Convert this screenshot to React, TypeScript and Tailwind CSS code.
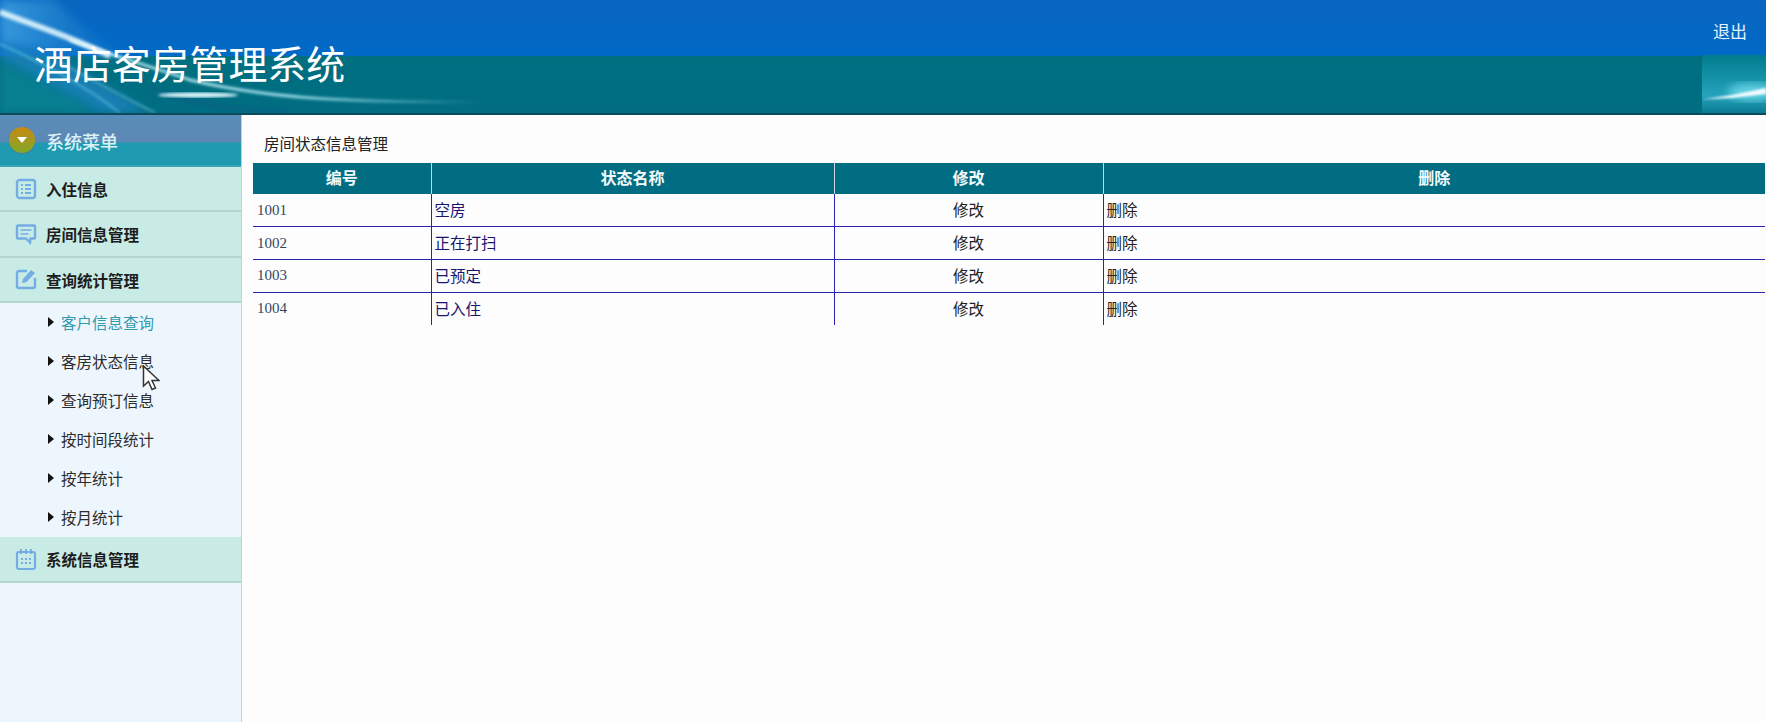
const cjk = "font-['Noto_Sans_CJK_SC',sans-serif]";

const rows = [
  { id: "1001", name: "空房" },
  { id: "1002", name: "正在打扫" },
  { id: "1003", name: "已预定" },
  { id: "1004", name: "已入住" },
];

const subMenu = ["客户信息查询", "客房状态信息", "查询预订信息", "按时间段统计", "按年统计", "按月统计"];

const ListIcon = () => (
  <svg width="22" height="22" viewBox="0 0 22 22" fill="none" stroke="#74ace4" strokeWidth="2.4">
    <rect x="2" y="2" width="18" height="18" rx="2.5" />
    <path d="M6 7h2M10 7h6M6 11h2M10 11h6M6 15h2M10 15h6" strokeWidth="1.8" />
  </svg>
);

const ChatIcon = () => (
  <svg width="22" height="22" viewBox="0 0 22 22" fill="none" stroke="#74ace4" strokeWidth="2.4">
    <path d="M3 2.500h16a1 1 0 0 1 1 1v11a1 1 0 0 1-1 1h-3.500l-.5 4-4-4H3a1 1 0 0 1-1-1v-11a1 1 0 0 1 1-1z" />
    <path d="M5.500 7h11M5.500 11h8" strokeWidth="1.700" />
  </svg>
);

const EditIcon = () => (
  <svg width="22" height="22" viewBox="0 0 22 22" fill="none" stroke="#74ace4" strokeWidth="2.4">
    <path d="M12 3H4a2 2 0 0 0-2 2v13a2 2 0 0 0 2 2h14a2 2 0 0 0 2-2v-8" />
    <path d="M7 15l1-4 8-9 4 3-8.500 9z" fill="#74ace4" stroke="none" />
  </svg>
);

const CalendarIcon = () => (
  <svg width="22" height="22" viewBox="0 0 22 22" fill="none" stroke="#74ace4" strokeWidth="2.2">
    <rect x="2" y="4" width="18" height="17" rx="2" />
    <path d="M6 1v5M11 1v5M16 1v5" strokeWidth="1.800" />
    <path d="M6 11h2M10 11h2M14 11h2M6 15h2M10 15h2M14 15h2" strokeWidth="1.800" />
  </svg>
);

const Cursor = () => (
  <svg width="18" height="26" viewBox="0 0 18 26" className="absolute left-[142px] top-[23px]">
    <path d="M1.500 1v20l5-4.500 3.500 8 3.500-1.500-3.500-7.500h7z" fill="#fff" stroke="#333" strokeWidth="1.500" />
  </svg>
);

const HeaderSwoosh = () => (
  <svg width="520" height="113" viewBox="0 0 520 113" fill="none" className="absolute left-0 top-0">
    <defs>
      <linearGradient id="fade" x1="0" x2="1" y1="0" y2="0">
        <stop offset="0" stopColor="#d8f6ff" />
        <stop offset="0.55" stopColor="#b5eef8" />
        <stop offset="1" stopColor="#8fe0f0" stopOpacity="0" />
      </linearGradient>
      <linearGradient id="glow" x1="0" x2="1" y1="0" y2="0">
        <stop offset="0" stopColor="#3a9ade" />
        <stop offset="1" stopColor="#0a6fbe" stopOpacity="0" />
      </linearGradient>
      <filter id="soft"><feGaussianBlur stdDeviation="1.500" /></filter>
      <filter id="softer"><feGaussianBlur stdDeviation="5" /></filter>
    </defs>
    <path d="M0 0H55C80 30 110 45 150 62L100 60L0 45z" fill="url(#glow)" filter="url(#softer)" />
    <path d="M0 40L60 58L150 113H100L0 60z" fill="#1d83c0" opacity="0.8" filter="url(#softer)" />
    <path d="M0 62L100 113H0z" fill="#0f8c9c" opacity="0.6" filter="url(#softer)" />
    <path d="M70 40C110 55 150 66 190 80C240 92 300 98 350 100C400 102 440 102 480 102" stroke="url(#fade)" strokeWidth="2.500" filter="url(#soft)" />
    <path d="M0 12C30 24 70 36 110 56" stroke="#eafcff" strokeWidth="6" opacity="0.85" filter="url(#soft)" />
    <path d="M0 44C40 62 85 85 120 113" stroke="#6fd0e6" strokeWidth="2" opacity="0.55" filter="url(#soft)" />
    <path d="M60 62C100 85 130 100 155 113" stroke="#9fe4f0" strokeWidth="2" opacity="0.45" filter="url(#soft)" />
    <path d="M150 88C200 108 240 110 290 112" stroke="#0b5f86" strokeWidth="6" opacity="0.45" filter="url(#soft)" />
    <ellipse cx="198" cy="95" rx="40" ry="2.500" fill="#e2fbff" filter="url(#soft)" />
  </svg>
);

const CornerGlow = () => (
  <svg width="64" height="58" viewBox="0 0 64 58" fill="none" className="absolute right-0 top-[55px]">
    <defs>
      <linearGradient id="cornerBg" x1="0" x2="0" y1="0" y2="1">
        <stop offset="0" stopColor="#007b8d" />
        <stop offset="0.7" stopColor="#26a3bc" />
        <stop offset="1" stopColor="#0a7a92" />
      </linearGradient>
      <filter id="cornerBlur"><feGaussianBlur stdDeviation="1" /></filter>
      <filter id="cornerBlur2"><feGaussianBlur stdDeviation="4" /></filter>
    </defs>
    <rect width="64" height="58" fill="url(#cornerBg)" />
    <ellipse cx="50" cy="37" rx="24" ry="9" fill="#6fdcec" opacity="0.8" filter="url(#cornerBlur2)" />
    <path d="M0 44.500L30 40 64 33V39L30 43z" fill="#f2fbff" filter="url(#cornerBlur)" />
  </svg>
);

const MenuItem = ({ icon, label }: { icon: React.ReactNode; label: string }) => (
  <div className="flex h-[45.400px] items-center gap-[9px] border-b-2 border-[#b5d5d2] bg-[#c9ebe6] pl-[15px] text-[15.500px] font-bold text-[#1d1d1d]">
    {icon}
    <span className="pt-[2px]">{label}</span>
  </div>
);

export default function App() {
  return (
    <div className={`min-h-[722px] bg-[#fdfdfd] ${cjk}`}>
      <header className="relative h-[115px] overflow-hidden border-b-2 border-[#0c4a5c] bg-[linear-gradient(#0a66c0_0,#0069c6_56px,#006f80_56px,#006d82_113px)]">
        <HeaderSwoosh />
        <CornerGlow />
        <div className="relative flex items-start justify-between pl-[34px] pr-[19px]">
          <h1 className="mt-[34px] text-[38.900px] font-normal leading-[56px] text-white">酒店客房管理系统</h1>
          <a href="#" className="mt-[19px] text-[17px] leading-6 text-[#e6f2fb]">退出</a>
        </div>
      </header>

      <div className="flex">
        <aside className="min-h-[607px] w-[242px] shrink-0 border-r border-[#b7d4ec] bg-[#eef6fd]">
          <div className="flex h-[52px] items-center gap-[11px] border-b-2 border-[#38a5ba] bg-[linear-gradient(#5a8db9_0,#5c88b6_27px,#1f9ab0_28px,#1f9ab0_100%)] pl-[9px]">
            <span className="flex h-[26px] w-[26px] items-center justify-center rounded-full bg-[linear-gradient(#c88a10,#80a82a)] shadow-[0_1px_1px_#4c7a94]">
              <svg width="10" height="6" viewBox="0 0 10 6"><path d="M0 0h10L5 6z" fill="#fff" /></svg>
            </span>
            <span className="pt-[2px] text-[18px] font-medium text-[#dcf1f6]">系统菜单</span>
          </div>
          <MenuItem icon={<ListIcon />} label="入住信息" />
          <MenuItem icon={<ChatIcon />} label="房间信息管理" />
          <MenuItem icon={<EditIcon />} label="查询统计管理" />
          <ul>
            {subMenu.map((item, i) => (
              <li
                key={item}
                className={`relative flex h-[39px] items-center gap-[7px] pl-[48px] text-[15.500px] ${i === 0 ? "text-[#2f9bb0]" : "text-[#2c2c2c]"}`}
              >
                <svg width="6" height="10" viewBox="0 0 6 10" className="-mt-[2px]"><path d="M0 0l6 5-6 5z" fill="#111" /></svg>
                <span>{item}</span>
                {i === 1 && <Cursor />}
              </li>
            ))}
          </ul>
          <MenuItem icon={<CalendarIcon />} label="系统信息管理" />
        </aside>

        <main className="flex-1 pl-[11px]">
          <div className="flex h-[48px] items-center pl-[11px] pt-[9px] text-[15.500px] text-[#222]">房间状态信息管理</div>
          <table className="w-[1512px] table-fixed border-collapse">
            <colgroup>
              <col className="w-[178px]" />
              <col className="w-[403px]" />
              <col className="w-[269px]" />
              <col className="w-[662px]" />
            </colgroup>
            <thead>
              <tr className="h-[31px] bg-[#006d82] text-[16px] font-bold text-[#f2fafc]">
                <th className="pb-[3px] text-center font-bold">编号</th>
                <th className="border-l border-[#c9d5d9] pb-[3px] text-center font-bold">状态名称</th>
                <th className="border-l border-[#c9d5d9] pb-[3px] text-center font-bold">修改</th>
                <th className="border-l border-[#c9d5d9] pb-[3px] text-center font-bold">删除</th>
              </tr>
            </thead>
            <tbody className="text-[15.500px]">
              {rows.map((row, i) => (
                <tr key={row.id} className={`h-[32.700px] ${i < rows.length - 1 ? "border-b border-[#2a22b0]" : ""}`}>
                  <td className="pl-[4px] font-['Liberation_Serif',serif] text-[15px] text-[#34465e]">{row.id}</td>
                  <td className="border-l border-[#2a22b0] pb-[1px] pl-[3px] text-[#16166e]">{row.name}</td>
                  <td className="border-l border-[#2a22b0] pb-[1px] text-center text-[#222]">修改</td>
                  <td className="border-l border-[#2a22b0] pb-[1px] pl-[3px] text-[#222]">删除</td>
                </tr>
              ))}
            </tbody>
          </table>
        </main>
      </div>
    </div>
  );
}
